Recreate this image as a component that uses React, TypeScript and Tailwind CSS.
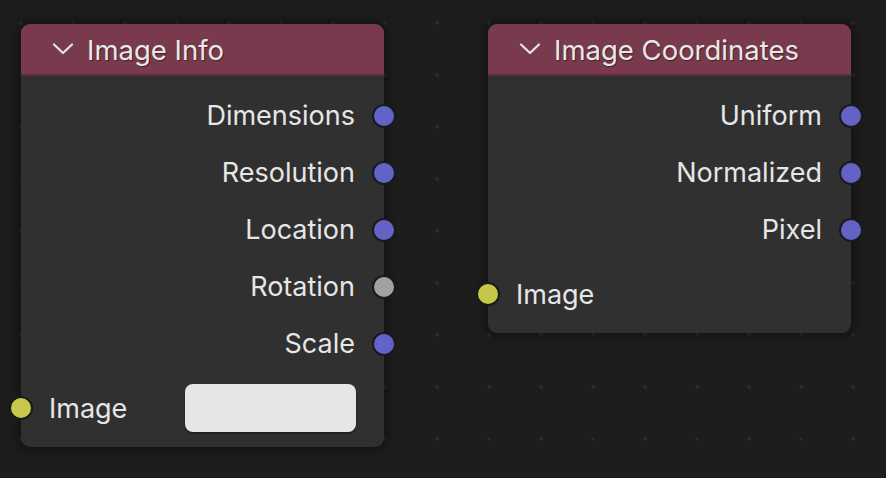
import React from "react";

type Socket = { label: string; color: string };

function Dot({ color, side }: { color: string; side: "left" | "right" }) {
    return (
        <span
            className={
                "absolute top-1/2 -translate-y-1/2 w-[24px] h-[24px] rounded-full border-[2px] border-[#1a1a1a] " +
                (side === "right" ? "right-[-12px] " : "left-[-12px] ") +
                color
            }
        />
    );
}

function Chevron() {
    return (
        <svg width="22" height="14" viewBox="0 0 22 14" className="shrink-0">
            <path d="M2 2.5 L11 11 L20 2.5" fill="none" stroke="#e6e6e6" strokeWidth="2.2" strokeLinecap="round" strokeLinejoin="round" />
        </svg>
    );
}

function Node({ title, outputs, children }: { title: string; outputs: Socket[]; children: React.ReactNode }) {
    return (
        <div className="w-[363px] rounded-[9px] bg-[#303030] shadow-[0_0_10px_4px_rgba(0,0,0,0.35)] flex flex-col">
            <div className="h-[52px] rounded-t-[9px] bg-[#7a3a4d] border-b-[2px] border-[#5e2c3b] flex items-center gap-[13px] pl-[31px]">
                <Chevron />
                <span className="mt-[3px] text-[27.5px] text-[#e8e8e8] [text-shadow:1px_1px_1px_rgba(0,0,0,0.45)]">{title}</span>
            </div>
            <div className="pt-[11px] flex flex-col">
                {outputs.map((o) => (
                    <div key={o.label} className="relative h-[57px] flex items-center justify-end pr-[29px]">
                        <span className="mt-[2px] text-[27px] text-[#e6e6e6]">{o.label}</span>
                        <Dot color={o.color} side="right" />
                    </div>
                ))}
            </div>
            {children}
        </div>
    );
}

export default function App() {
    return (
        <div
            className="w-[886px] h-[478px] overflow-hidden bg-[#1d1d1d] bg-[radial-gradient(circle,#2a2a2a_1.6px,transparent_2px)] bg-[size:52px_52px] bg-[position:411px_-3px] flex items-start gap-[104px] pl-[21px] pt-[24px]"
            style={{ fontFamily: "Inter, 'Noto Sans', sans-serif" }}
        >
            <Node
                title="Image Info"
                outputs={[
                    { label: "Dimensions", color: "bg-[#6363c7]" },
                    { label: "Resolution", color: "bg-[#6363c7]" },
                    { label: "Location", color: "bg-[#6363c7]" },
                    { label: "Rotation", color: "bg-[#a1a1a1]" },
                    { label: "Scale", color: "bg-[#6363c7]" },
                ]}
            >
                <div className="relative mt-[12px] mb-[15px] h-[48px] flex items-center justify-between pl-[28px] pr-[28px]">
                    <Dot color="bg-[#c7c74c]" side="left" />
                    <span className="mt-[2px] text-[27px] text-[#e6e6e6]">Image</span>
                    <div className="w-[171px] h-[48px] rounded-[8px] bg-[#e6e6e6] shadow-[0_2px_2px_rgba(0,0,0,0.35)]" />
                </div>
            </Node>
            <Node
                title="Image Coordinates"
                outputs={[
                    { label: "Uniform", color: "bg-[#6363c7]" },
                    { label: "Normalized", color: "bg-[#6363c7]" },
                    { label: "Pixel", color: "bg-[#6363c7]" },
                ]}
            >
                <div className="relative mt-[16px] mb-[19px] h-[40px] flex items-center pl-[28px]">
                    <Dot color="bg-[#c7c74c]" side="left" />
                    <span className="mt-[2px] text-[27px] text-[#e6e6e6]">Image</span>
                </div>
            </Node>
        </div>
    );
}
